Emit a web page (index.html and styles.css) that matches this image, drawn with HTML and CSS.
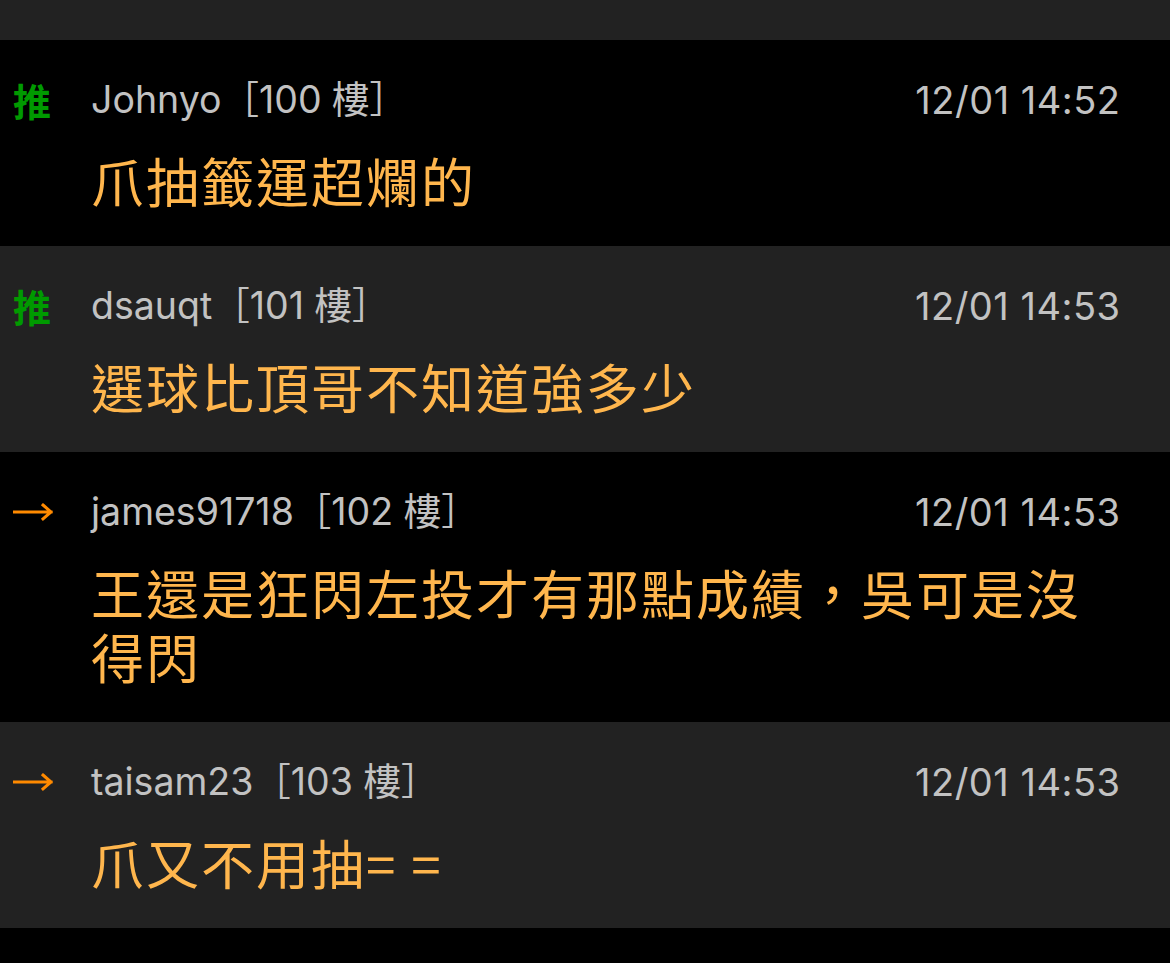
FILE: index.html
```html
<!DOCTYPE html>
<html lang="zh-Hant">
  <head>
    <meta charset="UTF-8" />
    <meta name="viewport" content="width=device-width, initial-scale=1.0" />
    <title>推文</title>
    <link rel="stylesheet" href="styles.css">
  </head>
  <body>
    <main class="push-list">
      <div class="push-top"></div>

      <div class="push-row">
        <span class="push-tag tag-good">推</span>
        <div class="push-body">
          <div class="push-head">
            <span class="push-user">Johnyo<span class="push-floor">［100 樓］</span></span>
            <span class="push-time">12/01 14:52</span>
          </div>
          <div class="push-text">爪抽籤運超爛的</div>
        </div>
      </div>

      <div class="push-row">
        <span class="push-tag tag-good">推</span>
        <div class="push-body">
          <div class="push-head">
            <span class="push-user">dsauqt<span class="push-floor">［101 樓］</span></span>
            <span class="push-time">12/01 14:53</span>
          </div>
          <div class="push-text">選球比頂哥不知道強多少</div>
        </div>
      </div>

      <div class="push-row">
        <span class="push-tag tag-arrow">
          <svg width="40" height="20" viewBox="0 0 40 20" aria-label="→">
            <path d="M1 10 H38 M30 3 L38 10 L30 17" />
          </svg>
        </span>
        <div class="push-body">
          <div class="push-head">
            <span class="push-user">james91718<span class="push-floor">［102 樓］</span></span>
            <span class="push-time">12/01 14:53</span>
          </div>
          <div class="push-text">王還是狂閃左投才有那點成績，吳可是沒得閃</div>
        </div>
      </div>

      <div class="push-row">
        <span class="push-tag tag-arrow">
          <svg width="40" height="20" viewBox="0 0 40 20" aria-label="→">
            <path d="M1 10 H38 M30 3 L38 10 L30 17" />
          </svg>
        </span>
        <div class="push-body">
          <div class="push-head">
            <span class="push-user">taisam23<span class="push-floor">［103 樓］</span></span>
            <span class="push-time">12/01 14:53</span>
          </div>
          <div class="push-text">爪又不用抽= =</div>
        </div>
      </div>
    </main>
  </body>
</html>
```

FILE: styles.css
```css
:root {
  --bg-dark: #000000;
  --bg-light: #222222;
  --meta-color: #c2c2c2;
  --text-color: #ffb64d;
  --good-color: #009a00;
  --arrow-color: #ff8a00;

  font-family: Inter, "Noto Sans CJK TC", sans-serif;
  background-color: var(--bg-dark);
}

* {
  box-sizing: border-box;
}

html,
body {
  margin: 0;
  height: 100%;
}

body {
  background-color: var(--bg-dark);
}

.push-list {
  display: flex;
  flex-direction: column;
}

.push-top {
  height: 40px;
  background-color: var(--bg-light);
}

.push-row {
  display: flex;
  padding: 36px 50px 34px 13px;
  background-color: var(--bg-dark);
}

.push-row:nth-child(odd) {
  background-color: var(--bg-light);
}

.push-tag {
  width: 78px;
  flex: none;
  height: 48px;
  line-height: 48px;
  font-size: 38px;
}

.tag-good {
  color: var(--good-color);
  font-family: "Noto Sans CJK TC", sans-serif;
  font-weight: 700;
}

.tag-arrow {
  display: flex;
  align-items: center;
}

.tag-arrow svg {
  fill: none;
  stroke: var(--arrow-color);
  stroke-width: 3;
  stroke-linecap: square;
}

.push-body {
  flex: 1;
  display: flex;
  flex-direction: column;
  gap: 24px;
}

.push-head {
  display: flex;
  justify-content: space-between;
  height: 48px;
  line-height: 48px;
  font-size: 37.5px;
  color: var(--meta-color);
}

.push-time {
  font-size: 38px;
  letter-spacing: 0.5px;
  margin-right: -0.5px;
}

.push-text {
  font-family: "Noto Sans CJK TC", sans-serif;
  font-size: 53px;
  line-height: 64px;
  color: var(--text-color);
  letter-spacing: 2px;
}
```
